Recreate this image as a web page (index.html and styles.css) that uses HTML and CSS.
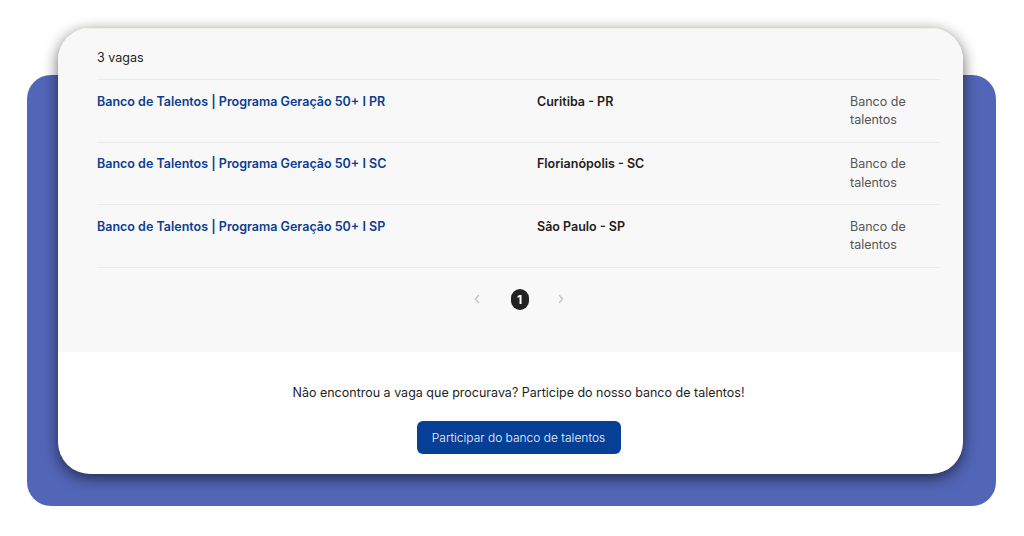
FILE: index.html
```html
<!DOCTYPE html>
<html lang="pt-BR">
<head>
<meta charset="utf-8">
<link rel="stylesheet" href="styles.css">
</head>
<body>
<div class="stage">
  <div class="backdrop"></div>
  <div class="card">
    <div class="list-section">
      <div class="count">3 vagas</div>
      <div class="row">
        <a class="job-title">Banco de Talentos | Programa Geração 50+ I PR</a>
        <div class="job-loc">Curitiba - PR</div>
        <div class="job-type">Banco de talentos</div>
      </div>
      <div class="row">
        <a class="job-title">Banco de Talentos | Programa Geração 50+ I SC</a>
        <div class="job-loc">Florianópolis - SC</div>
        <div class="job-type">Banco de talentos</div>
      </div>
      <div class="row">
        <a class="job-title">Banco de Talentos | Programa Geração 50+ I SP</a>
        <div class="job-loc">São Paulo - SP</div>
        <div class="job-type">Banco de talentos</div>
      </div>
      <div class="pagination">
        <span class="arrow prev"><svg width="8" height="10" viewBox="0 0 8 10"><path d="M5.5 1.5 L2.5 5 L5.5 8.5" fill="none" stroke="#c4c4c4" stroke-width="1.4" stroke-linecap="round" stroke-linejoin="round"/></svg></span>
        <span class="page">1</span>
        <span class="arrow"><svg width="8" height="10" viewBox="0 0 8 10"><path d="M2.5 1.5 L5.5 5 L2.5 8.5" fill="none" stroke="#c4c4c4" stroke-width="1.4" stroke-linecap="round" stroke-linejoin="round"/></svg></span>
      </div>
    </div>
    <div class="cta-section">
      <p class="cta-text">Não encontrou a vaga que procurava? Participe do nosso banco de talentos!</p>
      <a class="cta-btn">Participar do banco de talentos</a>
    </div>
  </div>
</div>
</body>
</html>
```
FILE: styles.css
```css
* { box-sizing: border-box; }
html, body { margin: 0; padding: 0; background: #ffffff; }
body { font-family: Inter, "Noto Sans", "Liberation Sans", sans-serif; color: #222; }
.stage {
  position: relative;
  width: 1024px;
  height: 536px;
  padding: 28px 0 0 58px;
}
.backdrop {
  position: absolute;
  left: 27px;
  top: 75px;
  width: 969px;
  height: 431px;
  background: #5266b8;
  border-radius: 24px;
}
.card {
  position: relative;
  width: 905px;
  height: 446px;
  border-radius: 32px;
  overflow: hidden;
  background: #ffffff;
  box-shadow: 0 4px 15px rgba(0, 0, 0, 0.6);
  display: flex;
  flex-direction: column;
}
.list-section {
  background: #f8f8f8;
  border-top: 1px solid #eef0e2;
  height: 324px;
  padding: 0 23px 0 39px;
}
.count {
  font-size: 12.5px;
  line-height: 18px;
  padding: 20px 0 12px;
  border-bottom: 1px solid #ebebeb;
}
.row {
  display: grid;
  grid-template-columns: 440px 313px 90px;
  padding: 12.5px 0 12px;
  border-bottom: 1px solid #ebebeb;
  font-size: 12.5px;
  line-height: 18.5px;
}
.job-title { color: #0b3d91; font-weight: 600; }
.job-loc { color: #1e1e1e; font-weight: 600; }
.job-type { color: #555; }
.pagination {
  display: flex;
  justify-content: center;
  align-items: center;
  gap: 28px;
  padding-top: 21px;
}
.arrow { display: flex; align-items: center; width: 8px; height: 10px; }
.arrow.prev { margin-right: 2px; }
.page {
  width: 18px;
  height: 21px;
  border-radius: 9px;
  background: #222;
  color: #fff;
  font-size: 12px;
  font-weight: 700;
  display: flex;
  align-items: center;
  justify-content: center;
}
.cta-section {
  flex: 1;
  display: flex;
  flex-direction: column;
  align-items: center;
  padding: 32px 23px 0 39px;
}
.cta-text {
  margin: 0;
  font-size: 12.5px;
  line-height: 18px;
  color: #1e1e1e;
}
.cta-btn {
  margin-top: 19px;
  width: 204px;
  height: 33px;
  border-radius: 6px;
  background: #063f96;
  color: #f2f4ff;
  font-size: 12px;
  font-weight: 300;
  display: flex;
  align-items: center;
  justify-content: center;
}
```
